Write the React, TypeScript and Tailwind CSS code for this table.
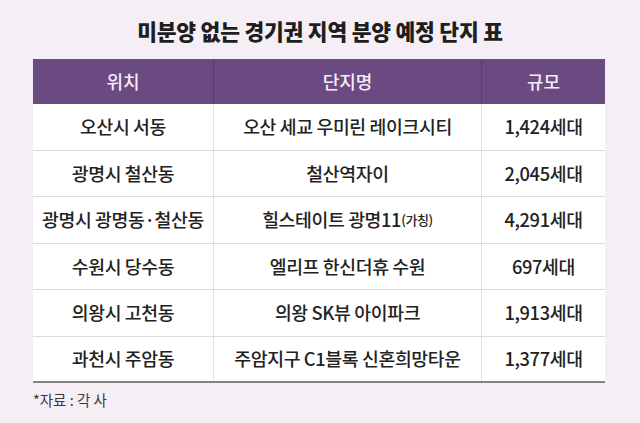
const rows: { loc: string; name: React.ReactNode; size: string }[] = [
  { loc: '오산시 서동', name: '오산 세교 우미린 레이크시티', size: '1,424세대' },
  { loc: '광명시 철산동', name: '철산역자이', size: '2,045세대' },
  {
    loc: '광명시 광명동·철산동',
    name: (
      <>
        힐스테이트 광명11<span className="text-[13px]">(가칭)</span>
      </>
    ),
    size: '4,291세대',
  },
  { loc: '수원시 당수동', name: '엘리프 한신더휴 수원', size: '697세대' },
  { loc: '의왕시 고천동', name: '의왕 SK뷰 아이파크', size: '1,913세대' },
  { loc: '과천시 주암동', name: '주암지구 C1블록 신혼희망타운', size: '1,377세대' },
]

export default function App() {
  return (
    <div
      className="w-[640px] h-[423px] bg-[#f6eef5] pt-[17px] overflow-hidden"
      style={{ fontFamily: '"Noto Sans CJK KR", "Noto Sans", sans-serif' }}
    >
      {/* Title */}
      <h1 className="text-center text-[21.5px] leading-[28px] font-extrabold text-[#1e1e1e] tracking-[-0.01em]">
        미분양 없는 경기권 지역 분양 예정 단지 표
      </h1>

      {/* Table */}
      <div className="ml-[33px] mt-[14px] w-[572px]">
        <div className="grid grid-cols-[181px_268px_123px] h-[45px] bg-[#6b4a82] text-[#f4ecf4] text-[18px] font-medium">
          <div className="flex items-center justify-center border-r border-[#5a3b70]">위치</div>
          <div className="flex items-center justify-center border-r border-[#5a3b70]">단지명</div>
          <div className="flex items-center justify-center">규모</div>
        </div>
        {rows.map((r, i) => (
          <div
            key={i}
            className={
              i === rows.length - 1
                ? 'grid grid-cols-[181px_268px_123px] h-[46.5px] bg-white text-[#222] text-[18.3px] font-medium tracking-[-0.02em] border-b-2 border-[#8a7d8c]'
                : 'grid grid-cols-[181px_268px_123px] h-[46.5px] bg-white text-[#222] text-[18.3px] font-medium tracking-[-0.02em] border-b border-[#dcdcdc]'
            }
          >
            <div className="flex items-center justify-center border-r border-[#e2e2e2] whitespace-nowrap">{r.loc}</div>
            <div className="flex items-center justify-center border-r border-[#e2e2e2] whitespace-nowrap">{r.name}</div>
            <div className="flex items-center justify-center whitespace-nowrap">{r.size}</div>
          </div>
        ))}
      </div>

      {/* Source */}
      <p className="ml-[33px] mt-[7px] text-[14.5px] leading-[20px] text-[#3a3a3a]">*자료 : 각 사</p>
    </div>
  )
}
